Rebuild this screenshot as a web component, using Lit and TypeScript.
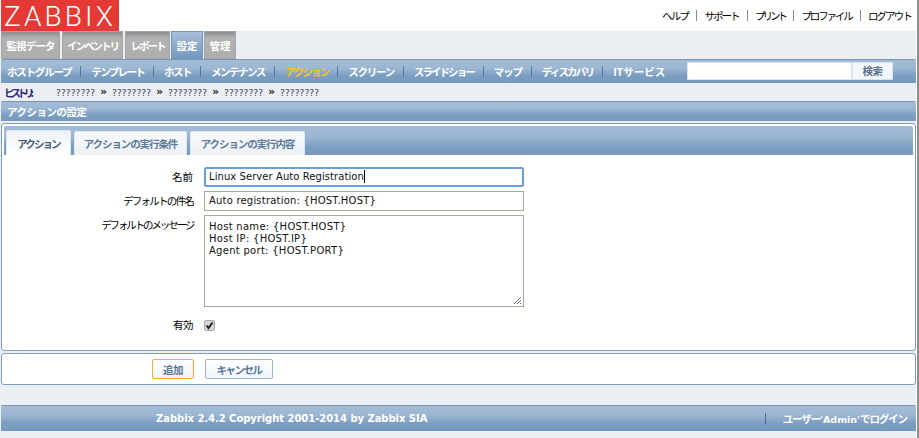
import { LitElement, html, css } from "lit";
import { customElement } from "lit/decorators.js";

/** Letter-spacing that makes a full-width text of n glyphs span the target width. */
const fit = (text: string, width: number, size: number) =>
  `letter-spacing:${((width - text.length * size) / text.length).toFixed(2)}px`;

const main: [string, number, number][] = [
  ["監視データ", 59, 48], ["インベントリ", 61, 51], ["レポート", 45, 34], ["設定", 32, 21], ["管理", 32, 21],
];
const sub: [string, number][] = [
  ["ホストグループ", 65], ["テンプレート", 53], ["ホスト", 27], ["メンテナンス", 54], ["アクション", 44],
  ["スクリーン", 46], ["スライドショー", 60], ["マップ", 28], ["ディスカバリ", 52],
];
const links: [string, number][] = [["ヘルプ", 26], ["サポート", 34], ["プリント", 30], ["プロファイル", 50], ["ログアウト", 43]];
const crumbs = ["????????", "????????", "????????", "????????", "????????"];

@customElement("app-root")
export class AppRoot extends LitElement {
  static styles = css`
    :host { display: block; box-sizing: border-box; width: 919px; height: 438px; overflow: hidden; background: #fff; border-right: 2px solid #8e8e8e; font-family: "Noto Sans CJK JP", "DejaVu Sans", sans-serif; font-size: 10.5px; color: #000; }
    .page { box-sizing: border-box; width: 917px; height: 438px; background: #ebeef2; border-right: 1px solid #fff; display: flex; flex-direction: column; }
    .top { height: 31px; background: #fff; display: flex; align-items: center; justify-content: space-between; padding-left: 1px; flex: none; }
    .logo { box-sizing: border-box; width: 118px; height: 31px; padding-top: 3px; background: #e53935; color: #fff; font: 300 28px/28px Roboto, "Liberation Sans", sans-serif; letter-spacing: 3.1px; text-align: center; white-space: nowrap; }
    .links { display: flex; align-items: center; padding-right: 5px; white-space: nowrap; }
    .links i { width: 1px; height: 11px; background: #7a8ea8; margin: 0 7.5px 0 8px; }
    .main { height: 28px; display: flex; gap: 2px; padding-left: 1px; flex: none; }
    .main .m:nth-child(n+4) { margin-left: -1px; }
    .m { box-sizing: border-box; background: linear-gradient(#8e8e8e, #b3b3b3 25%, #adadad); border: 1px solid #a5a5a5; color: #fff; font-weight: 700; display: flex; align-items: center; justify-content: center; white-space: nowrap; }
    .m.on { background: linear-gradient(#a7bed8, #7499bf); border-color: #6f96bd; }
    .bar { background: linear-gradient(#a3bcd6 0%, #9db7d2 35%, #7a9dc1 70%, #769bbf 100%); border-top: 1px solid #7b96b5; box-sizing: border-box; border-radius: 2px 2px 0 0; }
    .sub { height: 24px; margin-left: 1px; display: flex; align-items: center; padding: 0 0 1px 6px; color: #fff; font-weight: 700; flex: none; }
    .sub span { white-space: nowrap; }
    .sub .cur { color: #ffc20e; }
    .sub i { width: 1px; height: 11px; background: #59779b; margin: 0 10px 0 9px; }
    .search { margin-left: auto; margin-right: 23px; display: flex; }
    .search b { display: block; width: 165px; height: 18px; background: #fff; border: 1px solid #dbe4ee; box-sizing: border-box; }
    .search u { text-decoration: none; width: 41px; height: 18px; box-sizing: border-box; background: #f3f6fa; border: 1px solid #d8e2ec; color: #56718f; line-height: 15px; text-align: center; }
    .hist { height: 18px; display: flex; align-items: center; padding-left: 4px; color: #303a46; flex: none; }
    .hist strong { color: #2f2a7c; width: 52px; white-space: nowrap; }
    .hist .q { font: 9.2px "DejaVu Sans", sans-serif; color: #3a4452; width: 39px; white-space: nowrap; }
    .hist .sep { width: 17px; text-align: center; font: 700 11px/12px "DejaVu Sans", sans-serif; color: #222; }
    .title { height: 20px; margin-left: 1px; padding: 0 0 1px 6px; color: #fff; font-weight: 700; display: flex; align-items: center; flex: none; }
    .panel { margin: 2px 0 0 1px; height: 228px; box-sizing: border-box; border: 1px solid #7f9db9; border-radius: 3px; background: #fff; padding: 2px 2px 0; flex: none; }
    .tabs { height: 29px; display: flex; align-items: flex-end; gap: 3px; padding-left: 2px; border-radius: 2px 2px 0 0; background: linear-gradient(#a3bcd6, #9db7d2 35%, #7a9dc1 75%, #769bbf); }
    .tab { height: 24px; box-sizing: border-box; background: linear-gradient(#f7f9fc, #edf2f7); color: #5e7a99; font-weight: 700; display: flex; align-items: center; justify-content: center; border-radius: 2px 2px 0 0; border: 1px solid #dfe7ef; border-bottom: 0; white-space: nowrap; }
    .tab.on { height: 25px; color: #435c7a; background: linear-gradient(#edf2f7, #fff); }
    form { display: grid; grid-template-columns: 189px 320px; column-gap: 11px; row-gap: 4px; padding-top: 12px; align-items: start; }
    label { text-align: right; line-height: 20px; white-space: nowrap; }
    .inp { box-sizing: border-box; height: 20px; border: 1px solid #aca899; font: 10px/18px "DejaVu Sans", sans-serif; padding-left: 4px; background: #fff; color: #111; white-space: nowrap; letter-spacing: 0.2px; }
    .inp.focus { border: 2px solid #6f9be0; border-radius: 2px; line-height: 16px; padding-left: 3px; letter-spacing: 0.07px; }
    .caret { display: inline-block; width: 1px; height: 13px; background: #000; vertical-align: -3px; }
    .ta { box-sizing: border-box; height: 92px; border: 1px solid #aca899; font: 10px/12px "DejaVu Sans", sans-serif; padding: 5px 4px; position: relative; letter-spacing: 0.28px; color: #111; }
    .ta svg { position: absolute; right: 1px; bottom: 1px; }
    .chk { box-sizing: border-box; width: 11px; height: 11px; margin-top: 9px; border: 1px solid #a8a8a8; border-radius: 2px; background: #d8d8d8; display: flex; }
    .check-label { margin-top: 4px; }
    .actions { margin: 2px 0 0 1px; height: 32px; box-sizing: border-box; border: 1px solid #7f9db9; border-radius: 3px; background: #fff; display: flex; align-items: center; padding-left: 150px; gap: 11px; flex: none; }
    .btn { box-sizing: border-box; height: 20px; border: 1px solid #9bb4d0; border-radius: 2px; background: linear-gradient(#fff, #f1f5fa); color: #5a7596; font-weight: 700; display: flex; align-items: center; justify-content: center; white-space: nowrap; }
    .btn.add { width: 42px; border-color: #f6a93b; }
    .btn.cancel { width: 68px; }
    .foot { margin: 20px 0 0 1px; height: 26px; display: flex; align-items: center; color: #fff; font-weight: 700; flex: none; }
    .foot .copy { font: 700 10px "DejaVu Sans", sans-serif; margin-left: 155px; letter-spacing: -0.04px; white-space: nowrap; }
    .foot i { width: 1px; height: 11px; background: #56609c; margin-left: auto; }
    .foot .user { margin: 0 9px 0 17px; white-space: nowrap; }
    .foot .user span { letter-spacing: -1.1px; }
    .foot .user em { font: 700 9.5px "DejaVu Sans", sans-serif; }
  `;

  render() {
    const fs = 10.5;
    return html`<div class="page">
      <div class="top">
        <div class="logo">ZABBIX</div>
        <div class="links">${links.map(([l, w], i) => html`${i ? html`<i></i>` : ""}<span style=${fit(l, w, fs)}>${l}</span>`)}</div>
      </div>
      <div class="main">${main.map(([t, w, tw], i) => html`<div class="m ${i === 3 ? "on" : ""}" style="width:${w}px"><span style=${fit(t, tw, fs)}>${t}</span></div>`)}</div>
      <div class="bar sub">
        ${sub.map(([s, w], i) => html`${i ? html`<i></i>` : ""}<span class=${i === 4 ? "cur" : ""} style=${fit(s, w, fs)}>${s}</span>`)}
        <i></i><span>ITサービス</span>
        <div class="search"><b></b><u><span style=${fit("検索", 20, fs)}>検索</span></u></div>
      </div>
      <div class="hist"><strong style=${fit("ヒストリ:", 33, fs)}>ヒストリ:</strong>${crumbs.map((c, i) => html`${i ? html`<span class="sep">»</span>` : ""}<span class="q">${c}</span>`)}</div>
      <div class="bar title"><span style=${fit("アクションの設定", 80, fs)}>アクションの設定</span></div>
      <div class="panel">
        <div class="tabs">
          <div class="tab on" style="width:65px"><span style=${fit("アクション", 43, fs)}>アクション</span></div>
          <div class="tab" style="width:113px"><span style=${fit("アクションの実行条件", 94, fs)}>アクションの実行条件</span></div>
          <div class="tab" style="width:115px"><span style=${fit("アクションの実行内容", 94, fs)}>アクションの実行内容</span></div>
        </div>
        <form>
          <label style=${fit("名前", 21, fs)}>名前</label>
          <div class="inp focus">Linux Server Auto Registration<span class="caret"></span></div>
          <label style=${fit("デフォルトの件名", 70, fs)}>デフォルトの件名</label>
          <div class="inp">Auto registration: {HOST.HOST}</div>
          <label style=${fit("デフォルトのメッセージ", 92, fs)}>デフォルトのメッセージ</label>
          <div class="ta">Host name: {HOST.HOST}<br />Host IP: {HOST.IP}<br />Agent port: {HOST.PORT}
            <svg width="9" height="9" viewBox="0 0 9 9"><path d="M8 1 1 8M8 4 4 8M8 7 7 8" stroke="#666" fill="none"/></svg>
          </div>
          <label class="check-label" style=${fit("有効", 20, fs)}>有効</label>
          <div class="chk"><svg width="9" height="9" viewBox="0 0 9 9"><path d="M1.5 4.5 3.5 7 7.5 1.5" stroke="#222" stroke-width="2" fill="none"/></svg></div>
        </form>
      </div>
      <div class="actions">
        <div class="btn add"><span style=${fit("追加", 20, fs)}>追加</span></div>
        <div class="btn cancel"><span style=${fit("キャンセル", 45, fs)}>キャンセル</span></div>
      </div>
      <div class="bar foot"><span class="copy">Zabbix 2.4.2 Copyright 2001-2014 by Zabbix SIA</span><i></i><span class="user"><span>ユーザー</span><em>'Admin'</em><span>でログイン</span></span></div>
    </div>`;
  }
}
